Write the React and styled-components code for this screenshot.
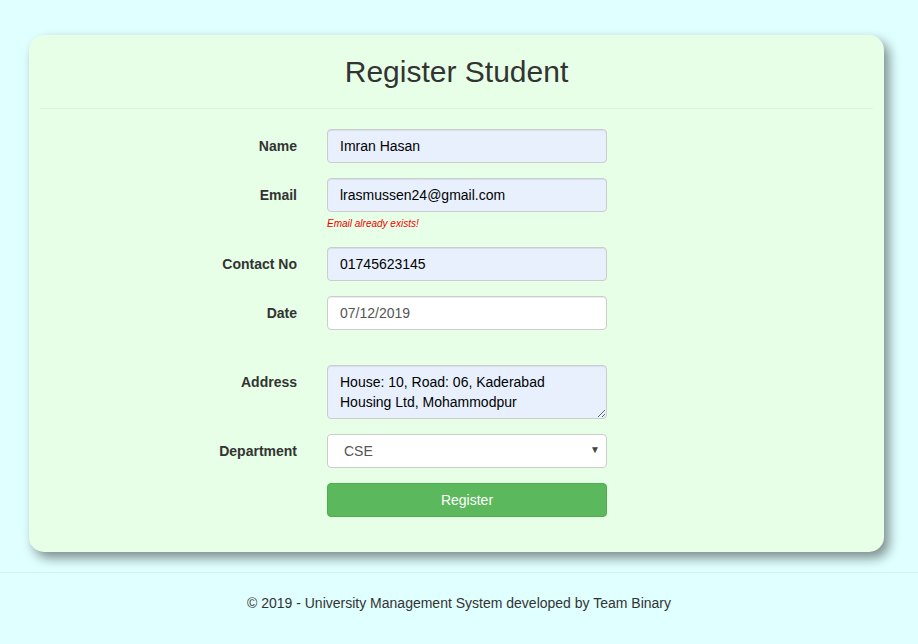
import styled, { createGlobalStyle } from "styled-components";

const GlobalStyle = createGlobalStyle`
  html, body {
    margin: 0;
    padding: 0;
    background: #e0ffff;
    font-family: "Liberation Sans", Arial, Helvetica, sans-serif;
    font-size: 14px;
    color: #333;
  }
  * { box-sizing: border-box; }
`;

// Main card holding the registration form
const Card = styled.div`
  margin: 35px 34px 0 29px;
  padding: 20px 11px 35px;
  background: #e6ffe6;
  border-radius: 15px;
  box-shadow: 5px 6px 12px rgba(0, 0, 0, 0.45);
`;

const Title = styled.h2`
  margin: 0;
  font-size: 30px;
  line-height: 33px;
  font-weight: 400;
  text-align: center;
  color: #333;
`;

const Divider = styled.hr`
  margin: 20px 0 20px;
  border: 0;
  border-top: 1px solid #e3f3e3;
`;

const Form = styled.form`
  display: flex;
  flex-direction: column;
  gap: 15px;
`;

const Row = styled.div`
  display: grid;
  grid-template-columns: 257px 280px;
  column-gap: 30px;
  align-items: start;
`;

const Label = styled.label`
  padding-top: 7px;
  line-height: 20px;
  font-weight: 700;
  text-align: right;
  color: #333;
`;

const Field = styled.div`
  display: flex;
  flex-direction: column;
  position: relative;
`;

const Input = styled.input`
  width: 100%;
  height: 34px;
  padding: 6px 12px;
  font: inherit;
  font-size: 14px;
  line-height: 20px;
  color: ${(p) => (p.$filled ? "#000" : "#555")};
  background: ${(p) => (p.$filled ? "#e8f0fe" : "#fff")};
  border: 1px solid #ccc;
  border-radius: 4px;
  box-shadow: inset 0 1px 1px rgba(0, 0, 0, 0.075);
  outline: none;
`;

const TextArea = styled.textarea`
  width: 100%;
  height: 54px;
  padding: 6px 12px;
  font: inherit;
  font-size: 14px;
  line-height: 20px;
  color: #000;
  background: #e8f0fe;
  border: 1px solid #ccc;
  border-radius: 4px;
  box-shadow: inset 0 1px 1px rgba(0, 0, 0, 0.075);
  outline: none;
  display: block;
`;

const Select = styled.select`
  width: 100%;
  height: 34px;
  padding: 6px 16px;
  font: inherit;
  font-size: 14px;
  color: #555;
  background: #fff;
  border: 1px solid #ccc;
  border-radius: 4px;
  appearance: none;
  outline: none;
`;

const Caret = styled.span`
  position: absolute;
  right: 7px;
  top: 11px;
  font-size: 10px;
  line-height: 10px;
  color: #444;
  pointer-events: none;
`;

const Hint = styled.span`
  display: block;
  height: 20px;
  padding-top: 5px;
  line-height: 14px;
  font-size: 10px;
  font-style: italic;
  color: #e00;
`;

const Button = styled.button`
  width: 100%;
  height: 34px;
  font: inherit;
  font-size: 14px;
  color: #fff;
  background: #5cb85c;
  border: 1px solid #4cae4c;
  border-radius: 4px;
`;

const Footer = styled.footer`
  margin-top: 20px;
  border-top: 1px solid #d4f0f0;
  padding-top: 20px;
  text-align: center;
  line-height: 20px;
  color: #333;
`;

export default function App() {
  return (
    <>
      <GlobalStyle />
      <Card>
        <Title>Register Student</Title>
        <Divider />
        <Form onSubmit={(e) => e.preventDefault()}>
          <Row>
            <Label>Name</Label>
            <Field>
              <Input $filled defaultValue="Imran Hasan" />
            </Field>
          </Row>
          <Row>
            <Label>Email</Label>
            <Field>
              <Input $filled defaultValue="lrasmussen24@gmail.com" />
              <Hint>Email already exists!</Hint>
            </Field>
          </Row>
          <Row>
            <Label>Contact No</Label>
            <Field>
              <Input $filled defaultValue="01745623145" />
            </Field>
          </Row>
          <Row>
            <Label>Date</Label>
            <Field>
              <Input defaultValue="07/12/2019" />
              <Hint />
            </Field>
          </Row>
          <Row>
            <Label>Address</Label>
            <Field>
              <TextArea
                rows={2}
                defaultValue={"House: 10, Road: 06, Kaderabad Housing Ltd, Mohammodpur"}
              />
            </Field>
          </Row>
          <Row>
            <Label>Department</Label>
            <Field>
              <Select defaultValue="CSE">
                <option>CSE</option>
                <option>EEE</option>
                <option>BBA</option>
              </Select>
              <Caret>▼</Caret>
            </Field>
          </Row>
          <Row>
            <span />
            <Field>
              <Button type="submit">Register</Button>
            </Field>
          </Row>
        </Form>
      </Card>
      <Footer>© 2019 - University Management System developed by Team Binary</Footer>
    </>
  );
}
